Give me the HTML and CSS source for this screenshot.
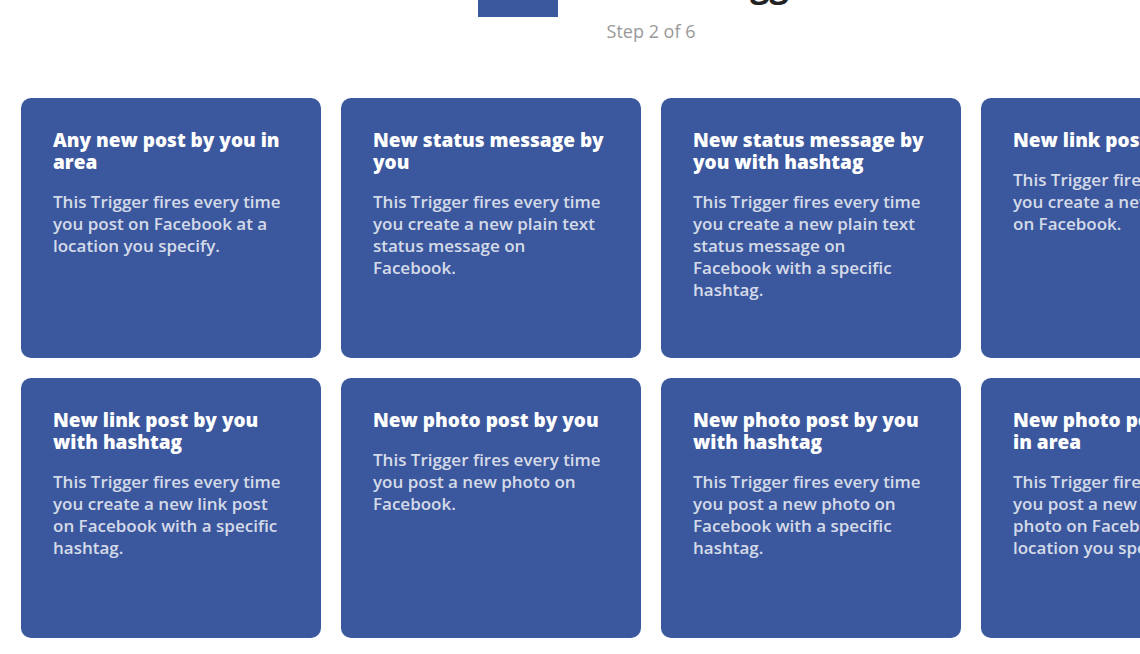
FILE: index.html
```html
<!DOCTYPE html>
<html lang="en">
<head>
    <meta charset="UTF-8">
    <meta name="viewport" content="width=device-width, initial-scale=1.0">
    <title>Choose trigger</title>
    <link rel="stylesheet" href="styles.css">
</head>
<body>
    <div class="page">
        <header class="header">
            <div class="title-row">
                <div class="service-logo"></div>
                <h1>Choose trigger</h1>
            </div>
            <p class="step">Step 2 of 6</p>
        </header>

        <div class="trigger-grid">
            <div class="trigger-card">
                <h3>Any new post by you in area</h3>
                <p>This Trigger fires every time you post on Facebook at a location you specify.</p>
            </div>
            <div class="trigger-card">
                <h3>New status message by you</h3>
                <p>This Trigger fires every time you create a new plain text status message on Facebook.</p>
            </div>
            <div class="trigger-card">
                <h3>New status message by you with hashtag</h3>
                <p>This Trigger fires every time you create a new plain text status message on Facebook with a specific hashtag.</p>
            </div>
            <div class="trigger-card">
                <h3>New link post by you</h3>
                <p>This Trigger fires every time you create a new link post on Facebook.</p>
            </div>
            <div class="trigger-card">
                <h3>New link post by you with hashtag</h3>
                <p>This Trigger fires every time you create a new link post on Facebook with a specific hashtag.</p>
            </div>
            <div class="trigger-card">
                <h3>New photo post by you</h3>
                <p>This Trigger fires every time you post a new photo on Facebook.</p>
            </div>
            <div class="trigger-card">
                <h3>New photo post by you with hashtag</h3>
                <p>This Trigger fires every time you post a new photo on Facebook with a specific hashtag.</p>
            </div>
            <div class="trigger-card">
                <h3>New photo post by you in area</h3>
                <p>This Trigger fires every time you post a new<br>photo on Facebook at a location you specify.</p>
            </div>
        </div>
    </div>
</body>
</html>
```

FILE: styles.css
```css
body {
    margin: 0;
    background-color: #fff;
    font-family: "Open Sans", "Noto Sans", sans-serif;
    overflow: hidden;
}

.page {
    width: 1260px;
    padding-left: 21px;
}

.header {
    text-align: center;
}

.title-row {
    display: flex;
    justify-content: center;
    align-items: flex-end;
    gap: 20px;
    margin-top: -63px;
}

.service-logo {
    width: 80px;
    height: 80px;
    background-color: #3b579d;
}

.title-row h1 {
    margin: 0 0 13px;
    font-size: 34px;
    line-height: 40px;
    color: #222;
}

.step {
    margin: 3px 0 0;
    font-size: 18px;
    line-height: 22px;
    color: #999;
}

.trigger-grid {
    display: grid;
    grid-template-columns: repeat(4, 300px);
    grid-auto-rows: 260px;
    gap: 20px;
    margin-top: 56px;
}

.trigger-card {
    background-color: #3b579d;
    border-radius: 10px;
    padding: 31px 34px 31px 32px;
    box-sizing: border-box;
}

.trigger-card h3 {
    margin: 0;
    font-size: 19px;
    line-height: 22px;
    font-weight: 800;
    color: #fff;
}

.trigger-card p {
    margin: 18px 0 0;
    font-size: 17px;
    line-height: 22px;
    font-weight: 600;
    color: rgba(255, 255, 255, 0.8);
}
```
